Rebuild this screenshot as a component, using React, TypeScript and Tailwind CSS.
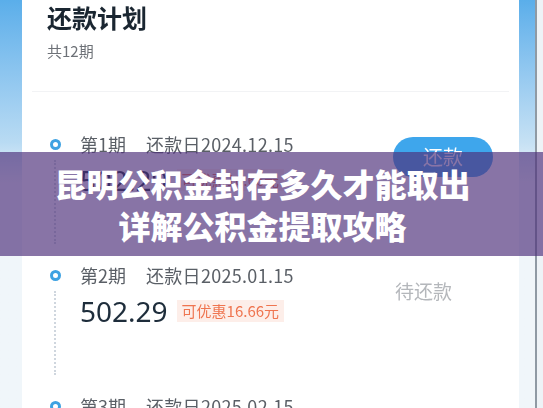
import React from 'react';

const font = { fontFamily: '"Noto Sans CJK SC", "Noto Sans", sans-serif' };

type Item = { no: number; date: string; amount: string; saving: string; action: 'pay' | 'wait' };

const items: Item[] = [
  { no: 1, date: '2024.12.15', amount: '502.29', saving: '16.66', action: 'pay' },
  { no: 2, date: '2025.01.15', amount: '502.29', saving: '16.66', action: 'wait' },
  { no: 3, date: '2025.02.15', amount: '502.29', saving: '16.66', action: 'wait' },
];

function PlanRow({ item }: { item: Item }) {
  return (
    <div className="flex h-[131px]">
      {/* timeline dot + dotted line */}
      <div className="flex w-[58px] flex-col items-center pt-[8px] pl-[8px]">
        <div className="h-[11px] w-[11px] rounded-full border-[3px] border-[#3ea2e2]" />
        <div className="mt-[10px] h-[84px] border-l-2 border-dotted border-[#cfd6de]" />
      </div>
      <div className="flex-1">
        <div className="flex items-center gap-[20px] text-[18px] leading-[26px] text-[#5a5f66]">
          <span>第{item.no}期</span>
          <span className="tracking-[0.3px]">还款日{item.date}</span>
        </div>
        <div className="mt-[6px] flex items-center gap-[9px]">
          <span className="text-[28px] leading-[34px] text-[#1e2d3b]" style={{ fontFamily: '"Noto Sans", sans-serif' }}>
            {item.amount}
          </span>
          <span className="bg-[#fdeee9] px-[5px] text-[15px] leading-[22px] text-[#ef7550]">
            可优惠{item.saving}元
          </span>
        </div>
      </div>
      <div className="w-[126px]">
        {item.action === 'pay' ? (
          <div className="mt-[6px] flex h-[40px] w-[100px] items-center justify-center rounded-full bg-[#3ea6ec] text-[20px] text-white">
            还款
          </div>
        ) : (
          <div className="ml-[2px] mt-[16px] text-[19px] leading-[26px] text-[#b4b7bb]">待还款</div>
        )}
      </div>
    </div>
  );
}

export default function App() {
  return (
    <div className="relative flex h-[408px] w-[543px] overflow-hidden bg-[#f1f6fa]" style={font}>
      {/* left background strip */}
      <div className="w-[22px] bg-gradient-to-b from-[#5aaeea] via-[#b9dbf3] via-35% to-[#f0f6fa] to-45%" />

      {/* card */}
      <div className="flex flex-1 flex-col bg-white blur-[0.4px]">
        <div className="px-[25px] pt-[1px]">
          <h1 className="text-[25px] font-bold leading-[32px] text-[#1a2631]">还款计划</h1>
          <p className="mt-[8px] text-[15px] leading-[20px] text-[#6d7177]">共12期</p>
        </div>
        <div className="mx-[10px] mt-[30px] border-t border-[#f2f3f5]" />
        <div className="mt-[39px]">
          {items.map((it) => (
            <PlanRow key={it.no} item={it} />
          ))}
        </div>
      </div>

      {/* right background strip */}
      <div className="flex w-[24px]">
        <div className="w-[16px] bg-gradient-to-b from-[#5aaeea] via-[#c6e1f4] via-35% to-[#f0f6fa] to-45%" />
        <div className="w-[2px] bg-[#8f9aa4]" />
        <div className="flex-1 bg-[#eef3f7]" />
      </div>

      {/* title banner overlay */}
      <div className="absolute left-0 right-0 top-[152px] flex h-[104px] flex-col items-center justify-center bg-[#4e307a]/[0.67] pr-[18px]">
        <p className="text-[32px] font-black leading-[42px] text-white">昆明公积金封存多久才能取出</p>
        <p className="text-[32px] font-black leading-[42px] text-white">详解公积金提取攻略</p>
      </div>
    </div>
  );
}
